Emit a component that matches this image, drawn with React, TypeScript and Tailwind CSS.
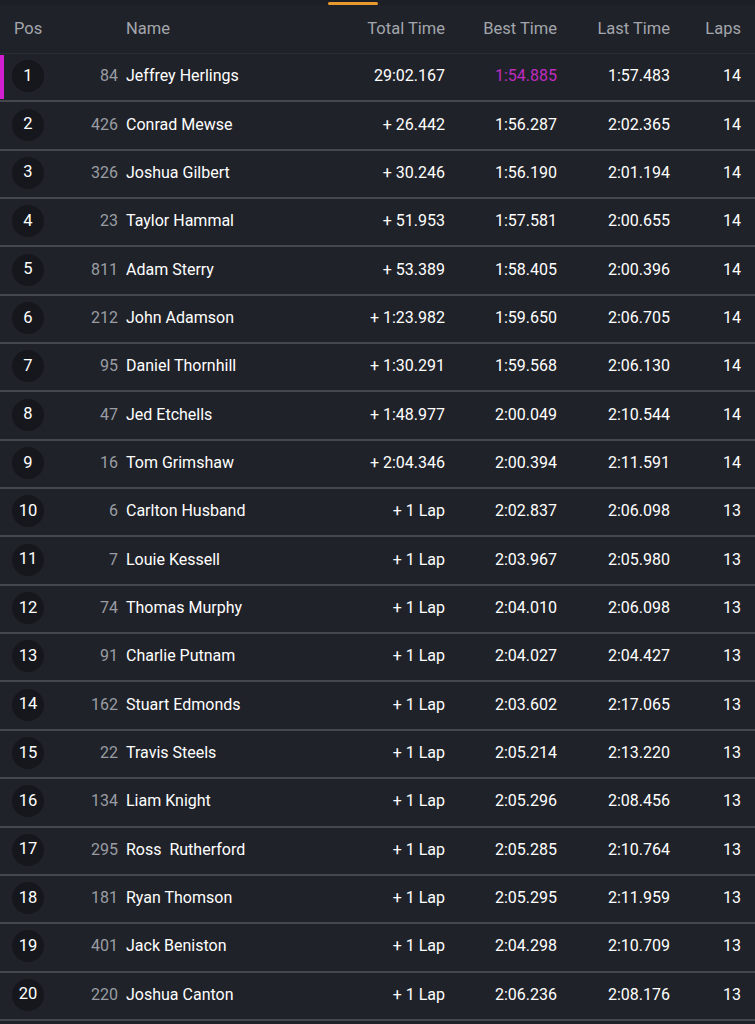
import React from "react";

const rows: [number, number, string, string, string, string, number][] = [
  [1, 84, "Jeffrey Herlings", "29:02.167", "1:54.885", "1:57.483", 14],
  [2, 426, "Conrad Mewse", "+ 26.442", "1:56.287", "2:02.365", 14],
  [3, 326, "Joshua Gilbert", "+ 30.246", "1:56.190", "2:01.194", 14],
  [4, 23, "Taylor Hammal", "+ 51.953", "1:57.581", "2:00.655", 14],
  [5, 811, "Adam Sterry", "+ 53.389", "1:58.405", "2:00.396", 14],
  [6, 212, "John Adamson", "+ 1:23.982", "1:59.650", "2:06.705", 14],
  [7, 95, "Daniel Thornhill", "+ 1:30.291", "1:59.568", "2:06.130", 14],
  [8, 47, "Jed Etchells", "+ 1:48.977", "2:00.049", "2:10.544", 14],
  [9, 16, "Tom Grimshaw", "+ 2:04.346", "2:00.394", "2:11.591", 14],
  [10, 6, "Carlton Husband", "+ 1 Lap", "2:02.837", "2:06.098", 13],
  [11, 7, "Louie Kessell", "+ 1 Lap", "2:03.967", "2:05.980", 13],
  [12, 74, "Thomas Murphy", "+ 1 Lap", "2:04.010", "2:06.098", 13],
  [13, 91, "Charlie Putnam", "+ 1 Lap", "2:04.027", "2:04.427", 13],
  [14, 162, "Stuart Edmonds", "+ 1 Lap", "2:03.602", "2:17.065", 13],
  [15, 22, "Travis Steels", "+ 1 Lap", "2:05.214", "2:13.220", 13],
  [16, 134, "Liam Knight", "+ 1 Lap", "2:05.296", "2:08.456", 13],
  [17, 295, "Ross  Rutherford", "+ 1 Lap", "2:05.285", "2:10.764", 13],
  [18, 181, "Ryan Thomson", "+ 1 Lap", "2:05.295", "2:11.959", 13],
  [19, 401, "Jack Beniston", "+ 1 Lap", "2:04.298", "2:10.709", 13],
  [20, 220, "Joshua Canton", "+ 1 Lap", "2:06.236", "2:08.176", 13],
];

export default function App() {
  return (
    <div
      className="w-[755px] h-[1024px] overflow-hidden bg-[#1f2229] text-white"
      style={{ fontFamily: "Roboto, 'Noto Sans', sans-serif" }}
    >
      <div className="h-[5px] relative bg-[#1c1f25]">
        <div className="absolute left-[328px] top-[2px] w-[50px] h-[3px] bg-[#e89a2c] rounded-sm" />
      </div>
      <div className="flex items-center h-[49px] pt-[1px] text-[16.5px] text-[#a3a6ac] border-b border-[#2a2d34]">
        <div className="w-[64px] pl-[14px]">Pos</div>
        <div className="w-[62px]"></div>
        <div className="flex-1">Name</div>
        <div className="w-[120px] text-right">Total Time</div>
        <div className="w-[112px] text-right">Best Time</div>
        <div className="w-[113px] text-right">Last Time</div>
        <div className="w-[71px] text-right">Laps</div>
        <div className="w-[14px]"></div>
      </div>
      <div>
        {rows.map(([pos, num, name, total, best, last, laps]) => (
          <div
            key={pos}
            className="relative flex items-center h-[48.35px] pb-[2px] border-b-[2.5px] border-[#44474e] text-[16px]"
          >
            {pos === 1 && <div className="absolute left-0 top-[1px] bottom-[1px] w-[4px] bg-[#d21fd2]" />}
            <div className="w-[64px] pl-[12px]">
              <div className="w-[32px] h-[32px] rounded-full bg-[#15171c] flex items-center justify-center text-[16.5px]">
                {pos}
              </div>
            </div>
            <div className="w-[54px] text-right text-[#9a9da3]">{num}</div>
            <div className="w-[8px]"></div>
            <div className="flex-1 whitespace-pre">{name}</div>
            <div className="w-[120px] text-right">{total}</div>
            <div className={`w-[112px] text-right ${pos === 1 ? "text-[#c02bc0]" : ""}`}>{best}</div>
            <div className="w-[113px] text-right">{last}</div>
            <div className="w-[71px] text-right">{laps}</div>
            <div className="w-[14px]"></div>
          </div>
        ))}
      </div>
    </div>
  );
}
